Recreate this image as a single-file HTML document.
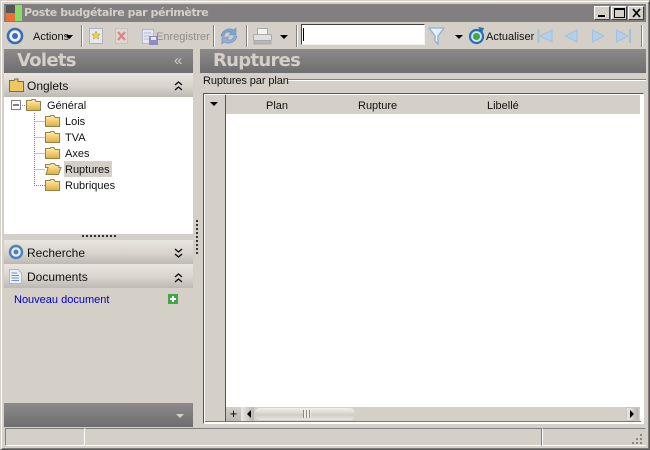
<!DOCTYPE html>
<html><head><meta charset="utf-8"><style>
*{box-sizing:border-box}
html,body{margin:0;padding:0;width:650px;height:450px;overflow:hidden;background:#d4d0c8}
body{position:relative;font:11px "Liberation Sans","DejaVu Sans",sans-serif;color:#111}
.a{position:absolute}
.t{position:absolute;white-space:nowrap;line-height:14px}
.bar{position:absolute;background:linear-gradient(#8c8a8a,#6f6e6e)}
.sec{position:absolute;left:4px;width:189px;height:24px;background:linear-gradient(#e9e5df,#d8d4cd 55%,#bcb9b3)}
.sep{position:absolute;top:25px;width:2px;height:22px;border-left:1px solid #808080;border-right:1px solid #fff}
.big{position:absolute;font:bold 18px "DejaVu Sans",sans-serif;letter-spacing:-.7px;color:#d4d0c8;white-space:nowrap;line-height:24px}
svg{position:absolute;overflow:visible}
.btn{position:absolute;top:6px;width:16px;height:14px;background:#d4d0c8;border:1px solid;border-color:#fff #404040 #404040 #fff}
</style></head><body>
<div class="a" style="left:0;top:0;width:650px;height:450px;border:1px solid #555;border-top-color:#d4d0c8;border-left-color:#d4d0c8;box-shadow:inset 1px 1px 0 #fff,inset -1px -1px 0 #808080"></div>

<!-- title -->
<div class="a" style="left:4px;top:4px;width:642px;height:18px;background:#817f7f"></div>
<svg style="left:6px;top:5px" width="16" height="17"><rect width="9" height="8" fill="#555"/><rect x="9" width="7" height="16" fill="#85dc68"/><rect y="8" width="9" height="8" fill="#e8713a"/></svg>
<div class="t" style="left:24px;top:6px;font:bold 11px 'DejaVu Sans',sans-serif;line-height:14px;color:#d4d0c8;letter-spacing:-.42px">Poste budgétaire par périmètre</div>
<div class="btn" style="left:594px"><div class="a" style="left:3px;top:8px;width:7px;height:2px;background:#000"></div></div>
<div class="btn" style="left:611px"><div class="a" style="left:2px;top:1px;width:11px;height:10px;border:1px solid #000;border-top-width:2px"></div></div>
<div class="btn" style="left:628px"><svg style="left:3px;top:2px" width="9" height="8"><path d="M1 0L8 8M8 0L1 8" stroke="#000" stroke-width="1.7"/></svg></div>

<!-- toolbar -->
<svg style="left:6px;top:27px" width="18" height="18"><circle cx="9" cy="9" r="7" fill="#eef" stroke="#3b6db5" stroke-width="2.6"/><circle cx="9" cy="9" r="3" fill="#3b6db5"/></svg>
<div class="t" style="left:33px;top:30px">Actions</div>
<svg style="left:66px;top:35px" width="8" height="5"><path d="M0 0H7L3.500 4Z" fill="#000"/></svg>
<div class="sep" style="left:81px"></div>
<svg style="left:89px;top:28px" width="15" height="16"><rect x=".5" y=".5" width="13" height="15" fill="#e6e6f4" stroke="#b0b0c4"/><path d="M7 3l1.300 3 3 .2-2.300 2 .8 3L7 9.600 4.200 11.200l.8-3-2.300-2 3-.2z" fill="#f0d040" stroke="#c0a020" stroke-width=".5"/></svg>
<svg style="left:115px;top:28px" width="14" height="16"><rect x=".5" y=".5" width="12" height="15" fill="#e0d6d6" stroke="#c8c0c0"/><path d="M3 4L10 12M10 4L3 12" stroke="#d88888" stroke-width="2.400"/></svg>
<svg style="left:142px;top:29px" width="16" height="16"><rect x=".5" y=".5" width="11" height="14" fill="#e6e6ee" stroke="#b8b8c8"/><path d="M2 4H9M2 7H9M2 10H9" stroke="#b0b8d8"/><rect x="7" y="7" width="9" height="9" fill="#8c8cc8"/><rect x="9" y="8" width="5" height="3" fill="#e8e8f4"/></svg>
<div class="t" style="left:156px;top:30px;color:#8f8d88">Enregistrer</div>
<div class="sep" style="left:213px"></div>
<svg style="left:220px;top:27px" width="18" height="18"><path d="M1 9C2 3 9 0 14 3L16 1V8H9L11 6C8 4 5 5 4 9Z" fill="#7da3cf" stroke="#6a90bf" stroke-width=".6"/><path d="M17 9C16 15 9 18 4 15L2 17V10H9L7 12C10 14 13 13 14 9Z" fill="#8fb0d6" stroke="#6a90bf" stroke-width=".6"/></svg>
<div class="sep" style="left:246px"></div>
<svg style="left:253px;top:28px" width="19" height="17"><rect x="4.500" y=".5" width="10" height="6" fill="#f4f4f4" stroke="#aaa"/><rect x=".5" y="6.500" width="18" height="6" rx="1" fill="#e0e0e0" stroke="#aaa"/><rect x="1" y="12.500" width="17" height="3.500" fill="#b8b8b8" stroke="#aaa"/></svg>
<svg style="left:280px;top:35px" width="9" height="5"><path d="M0 0H8L4 4Z" fill="#000"/></svg>
<div class="sep" style="left:296px"></div>
<div class="a" style="left:301px;top:24px;width:124px;height:21px;background:#fff;border:1px solid;border-color:#404040 #f4f2ee #f4f2ee #404040;box-shadow:inset 0 0 0 1px #fff"><div class="a" style="left:1px;top:3px;width:1px;height:13px;background:#000"></div></div>
<svg style="left:428px;top:27px" width="17" height="18"><path d="M1 1H16L10 9V17L7 14V9Z" fill="#eaf0f8" stroke="#8fb2d6" stroke-width="1.300"/></svg>
<svg style="left:455px;top:35px" width="9" height="5"><path d="M0 0H8L4 4Z" fill="#000"/></svg>
<svg style="left:468px;top:27px" width="18" height="18"><circle cx="8.500" cy="9.500" r="6.500" fill="#cfe0f0" stroke="#2a6fb5" stroke-width="2.200"/><circle cx="8.500" cy="9.500" r="3.500" fill="#3fa83f"/><path d="M10 0L16 1 14 6Z" fill="#2a6fb5"/></svg>
<div class="t" style="left:486px;top:30px">Actualiser</div>
<svg style="left:537px;top:28px" width="100" height="16" fill="#b4cfea" stroke="#a2c0e0"><path d="M1.500 1V15" stroke-width="2"/><path d="M15 2V14L3 8Z"/><path d="M40 2V14L28 8Z"/><path d="M55.500 2V14L67 8Z"/><path d="M79.500 2V14L91 8Z"/><path d="M93 1V15" stroke-width="2"/></svg>
<div class="sep" style="left:641px"></div>

<!-- headers -->
<div class="bar" style="left:4px;top:49px;width:189px;height:24px"></div>
<div class="big" style="left:17px;top:49px">Volets</div>
<div class="t" style="left:174px;top:54px;color:#d4d0c8;font-size:15px">«</div>
<div class="bar" style="left:200px;top:49px;width:446px;height:24px"></div>
<div class="big" style="left:213px;top:49px">Ruptures</div>

<!-- Onglets -->
<div class="sec" style="top:73px"></div>
<svg style="left:9px;top:78px" width="15" height="14"><path d="M.5 2.500H5L6 1H9V3.500H14.500V13.500H.5Z" fill="#efc65f" stroke="#7a6a40"/></svg>
<div class="t" style="left:27px;top:79px;font-size:12px">Onglets</div>
<svg style="left:174px;top:81px" width="10" height="10" fill="none" stroke="#111" stroke-width="1.400"><path d="M1 4L4.500 1 8 4M1 9L4.500 6 8 9"/></svg>

<!-- tree -->
<div class="a" style="left:4px;top:97px;width:189px;height:137px;background:#fff"></div>
<svg style="left:0;top:0;pointer-events:none" width="200" height="200">
<g fill="none" stroke="#888" stroke-dasharray="1 1"><path d="M22 105.500H26M34.500 113V185.500H45M34.500 121.500H45M34.500 137.500H45M34.500 153.500H45M34.500 169.500H45"/></g>
<rect x="11.500" y="100.500" width="9" height="9" fill="#fff" stroke="#808080"/><path d="M13 105H19" stroke="#000"/>
<defs><linearGradient id="f" x1="0" y1="0" x2="0" y2="1"><stop offset="0" stop-color="#fff0b4"/><stop offset="1" stop-color="#e8aa34"/></linearGradient></defs>
<g fill="url(#f)" stroke="#8f8450">
<path d="M26.500 100.500H31L32 99.500H35L36 101.500H40.500V110.500H26.500Z"/>
<path d="M45.500 116.500H50L51 115.500H54L55 117.500H59.500V126.500H45.500Z"/>
<path d="M45.500 132.500H50L51 131.500H54L55 133.500H59.500V142.500H45.500Z"/>
<path d="M45.500 148.500H50L51 147.500H54L55 149.500H59.500V158.500H45.500Z"/>
<path d="M45.500 164.500H50L51 163.500H54L56 165.500H59V167.500H61L58.500 174.500H46L48 167.500H45.500Z"/>
<path d="M45.500 180.500H50L51 179.500H54L55 181.500H59.500V190.500H45.500Z"/>
</g></svg>
<div class="t" style="left:47px;top:99px">Général</div>
<div class="t" style="left:65px;top:115px">Lois</div>
<div class="t" style="left:65px;top:131px">TVA</div>
<div class="t" style="left:65px;top:147px">Axes</div>
<div class="a" style="left:64px;top:161px;width:48px;height:16px;background:#d4d0c8"></div>
<div class="t" style="left:65px;top:163px">Ruptures</div>
<div class="t" style="left:65px;top:179px">Rubriques</div>

<!-- splitters -->
<div class="a" style="left:82px;top:235px;width:35px;height:2px;background:repeating-linear-gradient(90deg,#333 0 2px,#d4d0c8 2px 4px)"></div>
<div class="a" style="left:196px;top:220px;width:2px;height:36px;background:repeating-linear-gradient(#333 0 2px,#d4d0c8 2px 4px)"></div>

<!-- Recherche -->
<div class="sec" style="top:240px"></div>
<svg style="left:8px;top:244px" width="16" height="16"><circle cx="8" cy="8" r="6" fill="#e6eefa" stroke="#4f7fc0" stroke-width="2.400"/><circle cx="8" cy="8" r="2.500" fill="#4f7fc0"/></svg>
<div class="t" style="left:27px;top:246px;font-size:12px">Recherche</div>
<svg style="left:174px;top:248px" width="10" height="10" fill="none" stroke="#111" stroke-width="1.400"><path d="M1 1L4.500 4 8 1M1 6L4.500 9 8 6"/></svg>

<!-- Documents -->
<div class="sec" style="top:264px"></div>
<svg style="left:9px;top:269px" width="13" height="15"><path d="M.5 .5H9L12.500 4V14.500H.5Z" fill="#eaf0fc" stroke="#a9b8da"/><path d="M2.500 4H8M2.500 6.500H10M2.500 9H10M2.500 11.500H10" stroke="#6f8fd0"/></svg>
<div class="t" style="left:27px;top:270px;font-size:12px">Documents</div>
<svg style="left:174px;top:273px" width="10" height="10" fill="none" stroke="#111" stroke-width="1.400"><path d="M1 4L4.500 1 8 4M1 9L4.500 6 8 9"/></svg>
<div class="t" style="left:14px;top:293px;color:#0000c0">Nouveau document</div>
<svg style="left:168px;top:294px" width="10" height="10"><rect width="10" height="10" fill="#3fa64a"/><path d="M5 2V8M2 5H8" stroke="#fff" stroke-width="2"/></svg>

<!-- bottom bar -->
<div class="bar" style="left:4px;top:403px;width:189px;height:24px"></div>
<svg style="left:176px;top:414px" width="9" height="5"><path d="M0 0H8L4 4Z" fill="#d4d0c8"/></svg>

<!-- group label -->
<div class="t" style="left:203px;top:74px;letter-spacing:-.1px">Ruptures par plan</div>
<div class="a" style="left:288px;top:79px;width:358px;height:2px;border-top:1px solid #808080;border-bottom:1px solid #fff"></div>

<!-- grid -->
<div class="a" style="left:203px;top:93px;width:441px;height:331px;background:#fff;border:1px solid;border-color:#555 #fff #fff #555;box-shadow:inset 1px 1px 0 #fff"></div>
<div class="a" style="left:205px;top:95px;width:435px;height:19px;background:#d4d0c8"></div>
<div class="a" style="left:205px;top:95px;width:21px;height:327px;background:#d4d0c8"></div>
<div class="a" style="left:225px;top:95px;width:1px;height:327px;background:#555"></div>
<svg style="left:210px;top:102px" width="9" height="5"><path d="M0 0H8L4 4Z" fill="#000"/></svg>
<div class="t" style="left:266px;top:99px">Plan</div>
<div class="t" style="left:358px;top:99px">Rupture</div>
<div class="t" style="left:487px;top:99px">Libellé</div>

<!-- scrollbar -->
<div class="a" style="left:226px;top:407px;width:414px;height:15px;background:#d4d0c8"></div>
<div class="a" style="left:226px;top:407px;width:15px;height:14px;background:linear-gradient(#d4d0c8,#bbb8b2);text-align:center;font:13px/14px 'Liberation Sans',sans-serif;color:#000">+</div>
<div class="a" style="left:241px;top:407px;width:13px;height:14px;background:linear-gradient(90deg,#ece9e4,#b8b5af)"></div>
<svg style="left:247px;top:410px" width="5" height="9"><path d="M4 0V8L0 4Z" fill="#000"/></svg>
<div class="a" style="left:255px;top:408px;width:100px;height:12px;border-radius:5px;background:linear-gradient(#f2f0ec,#d0cdc7 60%,#e8e6e2)"></div>
<div class="a" style="left:303px;top:410px;width:8px;height:8px;background:repeating-linear-gradient(90deg,#8a8884 0 1px,#f0eeea 1px 3px)"></div>
<div class="a" style="left:626px;top:407px;width:13px;height:14px;background:linear-gradient(90deg,#ece9e4,#b8b5af);border:1px solid #c8c5bf"></div>
<svg style="left:630px;top:410px" width="5" height="9"><path d="M0 0V8L4 4Z" fill="#000"/></svg>
<div class="a" style="left:205px;top:421px;width:436px;height:1px;background:#777"></div>

<!-- status bar -->
<div class="a" style="left:5px;top:428px;width:80px;height:18px;border:1px solid;border-color:#808080 #fff #fff #808080"></div>
<div class="a" style="left:85px;top:428px;width:457px;height:18px;border:1px solid;border-color:#808080 #808080 #fff transparent"></div>
<div class="a" style="left:542px;top:428px;width:104px;height:18px;border:1px solid;border-color:#808080 #d4d0c8 #fff #fff"></div>
<svg style="left:631px;top:434px" width="12" height="11" fill="#8a8884"><rect x="9" y="0" width="2" height="2"/><rect x="5" y="4" width="2" height="2"/><rect x="9" y="4" width="2" height="2"/><rect x="1" y="8" width="2" height="2"/><rect x="5" y="8" width="2" height="2"/><rect x="9" y="8" width="2" height="2"/></svg>
</body></html>
